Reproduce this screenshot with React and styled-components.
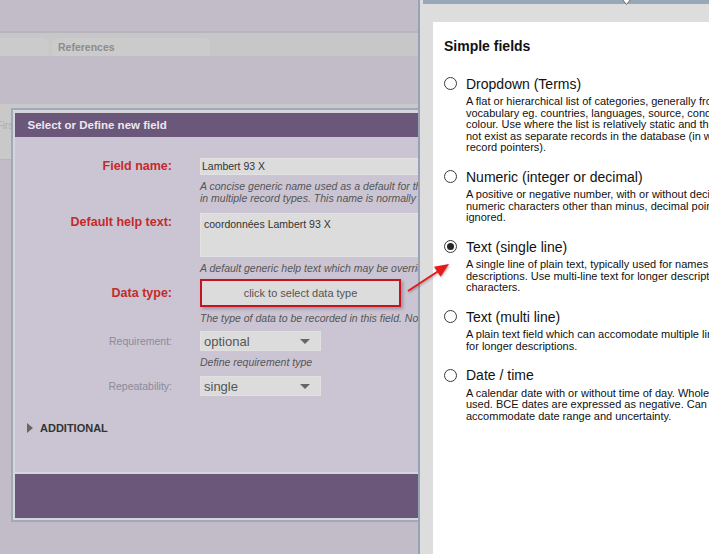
import React from 'react';
import styled, { createGlobalStyle } from 'styled-components';

const GlobalStyle = createGlobalStyle`
  html, body {
    margin: 0;
    padding: 0;
  }
  body {
    background: #c2bcc8;
    font-family: 'Liberation Sans', Arial, sans-serif;
    overflow: hidden;
  }
`;

const Page = styled.div`
  position: relative;
  width: 709px;
  height: 554px;
  overflow: hidden;
  background: #c2bcc8;
`;

/* ---------- page behind the modal ---------- */

const Backdrop = styled.div`
  display: flex;
  flex-direction: column;
  padding-top: 31px;
`;

const TabStrip = styled.div`
  display: flex;
  align-items: flex-end;
  gap: 3px;
  height: 25px;
  box-sizing: border-box;
  border-top: 2px solid #b9b4bd;
  background: #c7c7c7;
`;

const Tab = styled.div`
  width: ${p => p.$width}px;
  margin-left: ${p => p.$offset || 0}px;
  height: 18px;
  line-height: 18px;
  padding-left: 6px;
  box-sizing: border-box;
  background: #cbcbcb;
  border-radius: 6px 6px 0 0;
  font-size: 10.5px;
  font-weight: bold;
  color: #8c8c8c;
`;

const BehindPanel = styled.div`
  margin-top: 48px;
  height: 56px;
  background: #c9c9c9;
  border-bottom: 1px solid #b6b6b6;
  padding-top: 15px;
  box-sizing: border-box;
  font-size: 10.5px;
  color: #adadad;
  text-indent: -4px;
`;

/* ---------- modal dialog ---------- */

const Dialog = styled.div`
  position: absolute;
  left: 11px;
  top: 108px;
  width: 600px;
  height: 414px;
  box-sizing: border-box;
  border: 2px solid #9babb9;
  background: #d7d5d9;
  padding: 3px 0 2px 2px;
  display: flex;
  flex-direction: column;
`;

const DialogHeader = styled.div`
  height: 24px;
  line-height: 24px;
  padding-left: 12.5px;
  background: #6b5779;
  color: #ebe7f0;
  font-size: 11.5px;
  font-weight: bold;
`;

const DialogBody = styled.div`
  flex: 1;
  background: #cbc5d3;
  padding-top: 21px;
`;

const DialogFooter = styled.div`
  height: 44px;
  margin-top: 2px;
  background: #6b5779;
`;

const FieldRow = styled.div`
  display: grid;
  grid-template-columns: 157px 1fr;
  column-gap: 28px;
  align-items: center;
  margin-top: ${p => p.$mt || 0}px;
`;

const Label = styled.div`
  grid-column: 1;
  grid-row: 1;
  align-self: ${p => (p.$top ? 'start' : 'center')};
  text-align: right;
  line-height: 17px;
  font-size: ${p => (p.$required ? '12.5px' : '10.5px')};
  font-weight: ${p => (p.$required ? 'bold' : 'normal')};
  color: ${p => (p.$required ? '#c42a2c' : '#8a8a99')};
  padding-top: ${p => (p.$top ? 1 : 0)}px;
`;

const Control = styled.div`
  grid-column: 2;
  grid-row: 1;
`;

const TextBox = styled.div`
  width: 320px;
  height: ${p => p.$height}px;
  box-sizing: border-box;
  background: #dcdcdc;
  border: 1px solid #e2e2e2;
  padding: ${p => (p.$multi ? '3px 3px' : '0 1px')};
  line-height: 15px;
  font-size: 10.5px;
  color: #333;
  white-space: nowrap;
`;

const Help = styled.div`
  grid-column: 2;
  grid-row: 2;
  margin-top: 5px;
  font-size: 10.5px;
  font-style: italic;
  line-height: 12px;
  color: #555;
  white-space: nowrap;
`;

const DataTypeButton = styled.div`
  width: 201px;
  height: 28px;
  box-sizing: border-box;
  border: 2px solid #c3141f;
  background: #dcdcdc;
  box-shadow: 2px 2px 3px rgba(60, 50, 70, 0.35);
  display: flex;
  align-items: center;
  justify-content: center;
  font-size: 11px;
  color: #555;
`;

const Select = styled.div`
  width: 121px;
  height: 20px;
  box-sizing: border-box;
  background: #dcdcdc;
  border: 1px solid #e0e0e0;
  display: flex;
  align-items: center;
  justify-content: space-between;
  padding: 0 10px 0 3px;
  font-size: 13px;
  color: #555;
`;

const Caret = styled.span`
  width: 0;
  height: 0;
  border-left: 5px solid transparent;
  border-right: 5px solid transparent;
  border-top: 5px solid #666;
`;

const Additional = styled.div`
  display: flex;
  align-items: center;
  gap: 7px;
  margin-top: 25px;
  padding-left: 12px;
  font-size: 11px;
  font-weight: bold;
  line-height: 14px;
  color: #333;
`;

const Expander = styled.span`
  width: 0;
  height: 0;
  border-top: 5px solid transparent;
  border-bottom: 5px solid transparent;
  border-left: 6px solid #666;
`;

/* ---------- data type side panel ---------- */

const SidePanel = styled.div`
  position: absolute;
  top: 0;
  left: 418px;
  right: 0;
  bottom: 0;
  border-left: 2px solid #94a4b4;
  background: #dddddd;
  display: flex;
  flex-direction: column;
`;

const TopEdge = styled.div`
  position: relative;
  height: 4px;
  margin-left: 3px;
  background: #98a8b8;
`;

const Handle = styled.svg`
  position: absolute;
  left: 199px;
  top: -1px;
`;

const Card = styled.div`
  flex: 1;
  margin: 18px 0 0 13px;
  background: #fff;
  overflow: hidden;
  padding: 15.5px 0 0 11px;
`;

const Heading = styled.div`
  font-size: 14px;
  font-weight: bold;
  line-height: 16px;
  color: #111;
  margin-bottom: 22px;
`;

const Option = styled.div`
  display: grid;
  grid-template-columns: 13px auto;
  column-gap: 9px;
  margin-bottom: 15px;
`;

const Radio = styled.span`
  grid-column: 1;
  grid-row: 1;
  align-self: center;
  width: 13px;
  height: 13px;
  box-sizing: border-box;
  border: 1px solid #3a3a3a;
  border-radius: 50%;
  background: #fff;
  display: flex;
  align-items: center;
  justify-content: center;

  &::after {
    content: '';
    display: ${p => (p.$checked ? 'block' : 'none')};
    width: 7px;
    height: 7px;
    border-radius: 50%;
    background: #262626;
  }
`;

const OptionTitle = styled.div`
  grid-column: 2;
  font-size: 14px;
  line-height: 16px;
  color: #111;
`;

const OptionDesc = styled.div`
  grid-column: 2;
  margin-top: 4.5px;
  font-size: 11px;
  line-height: 11.5px;
  color: #111;
  white-space: nowrap;
`;

const Pointer = styled.svg`
  position: absolute;
  left: 400px;
  top: 255px;
  overflow: visible;
  filter: drop-shadow(1px 1px 1px rgba(0, 0, 0, 0.3));
`;

const fieldTypes = [
  {
    title: 'Dropdown (Terms)',
    lines: [
      'A flat or hierarchical list of categories, generally from a controlled',
      'vocabulary eg. countries, languages, source, condition, status,',
      'colour. Use where the list is relatively static and the values do',
      'not exist as separate records in the database (in which case use',
      'record pointers).',
    ],
  },
  {
    title: 'Numeric (integer or decimal)',
    lines: [
      'A positive or negative number, with or without decimal point. Non-',
      'numeric characters other than minus, decimal point and exponent are',
      'ignored.',
    ],
  },
  {
    title: 'Text (single line)',
    checked: true,
    lines: [
      'A single line of plain text, typically used for names, titles and short',
      'descriptions. Use multi-line text for longer descriptions or more than 64K',
      'characters.',
    ],
  },
  {
    title: 'Text (multi line)',
    lines: [
      'A plain text field which can accomodate multiple lines. Use',
      'for longer descriptions.',
    ],
  },
  {
    title: 'Date / time',
    lines: [
      'A calendar date with or without time of day. Whole years may be',
      'used. BCE dates are expressed as negative. Can also',
      'accommodate date range and uncertainty.',
    ],
  },
];

const Lines = ({ lines }) =>
  lines.map((line, i) => (
    <React.Fragment key={i}>
      {i > 0 && <br />}
      {line}
    </React.Fragment>
  ));

export default function App() {
  return (
    <Page>
      <GlobalStyle />

      <Backdrop>
        <TabStrip>
          <Tab $width={59} $offset={-10} />
          <Tab $width={158}>References</Tab>
        </TabStrip>
        <BehindPanel>First</BehindPanel>
      </Backdrop>

      <Dialog>
        <DialogHeader>Select or Define new field</DialogHeader>
        <DialogBody>
          <FieldRow>
            <Label $required>Field name:</Label>
            <Control>
              <TextBox $height={17}>Lambert 93 X</TextBox>
            </Control>
            <Help>
              A concise generic name used as a default for this field wherever it is used
              <br />
              in multiple record types. This name is normally overridden by a name specific
            </Help>
          </FieldRow>

          <FieldRow $mt={9}>
            <Label $required $top>Default help text:</Label>
            <Control>
              <TextBox $height={44} $multi>coordonnées Lambert 93 X</TextBox>
            </Control>
            <Help>A default generic help text which may be overridden in each record type</Help>
          </FieldRow>

          <FieldRow $mt={5}>
            <Label $required>Data type:</Label>
            <Control>
              <DataTypeButton>click to select data type</DataTypeButton>
            </Control>
            <Help>The type of data to be recorded in this field. Note: cannot be changed</Help>
          </FieldRow>

          <FieldRow $mt={7}>
            <Label>Requirement:</Label>
            <Control>
              <Select>
                optional
                <Caret />
              </Select>
            </Control>
            <Help>Define requirement type</Help>
          </FieldRow>

          <FieldRow $mt={8}>
            <Label>Repeatability:</Label>
            <Control>
              <Select>
                single
                <Caret />
              </Select>
            </Control>
          </FieldRow>

          <Additional>
            <Expander />
            ADDITIONAL
          </Additional>
        </DialogBody>
        <DialogFooter />
      </Dialog>

      <SidePanel>
        <TopEdge>
          <Handle width="9" height="7" viewBox="0 0 9 7">
            <polygon points="0.5,0.5 8.5,0.5 4.5,5.5" fill="#fff" stroke="#555" strokeWidth="0.8" />
          </Handle>
        </TopEdge>
        <Card>
          <Heading>Simple fields</Heading>
          {fieldTypes.map(t => (
            <Option key={t.title}>
              <Radio $checked={t.checked} />
              <OptionTitle>{t.title}</OptionTitle>
              <OptionDesc>
                <Lines lines={t.lines} />
              </OptionDesc>
            </Option>
          ))}
        </Card>
      </SidePanel>

      <Pointer width="60" height="45" viewBox="0 0 60 45">
        <line x1="8" y1="36" x2="38.5" y2="16" stroke="#e8191b" strokeWidth="2" />
        <polygon points="49,9 40.6,21.7 34,11.7" fill="#e8191b" />
      </Pointer>
    </Page>
  );
}
